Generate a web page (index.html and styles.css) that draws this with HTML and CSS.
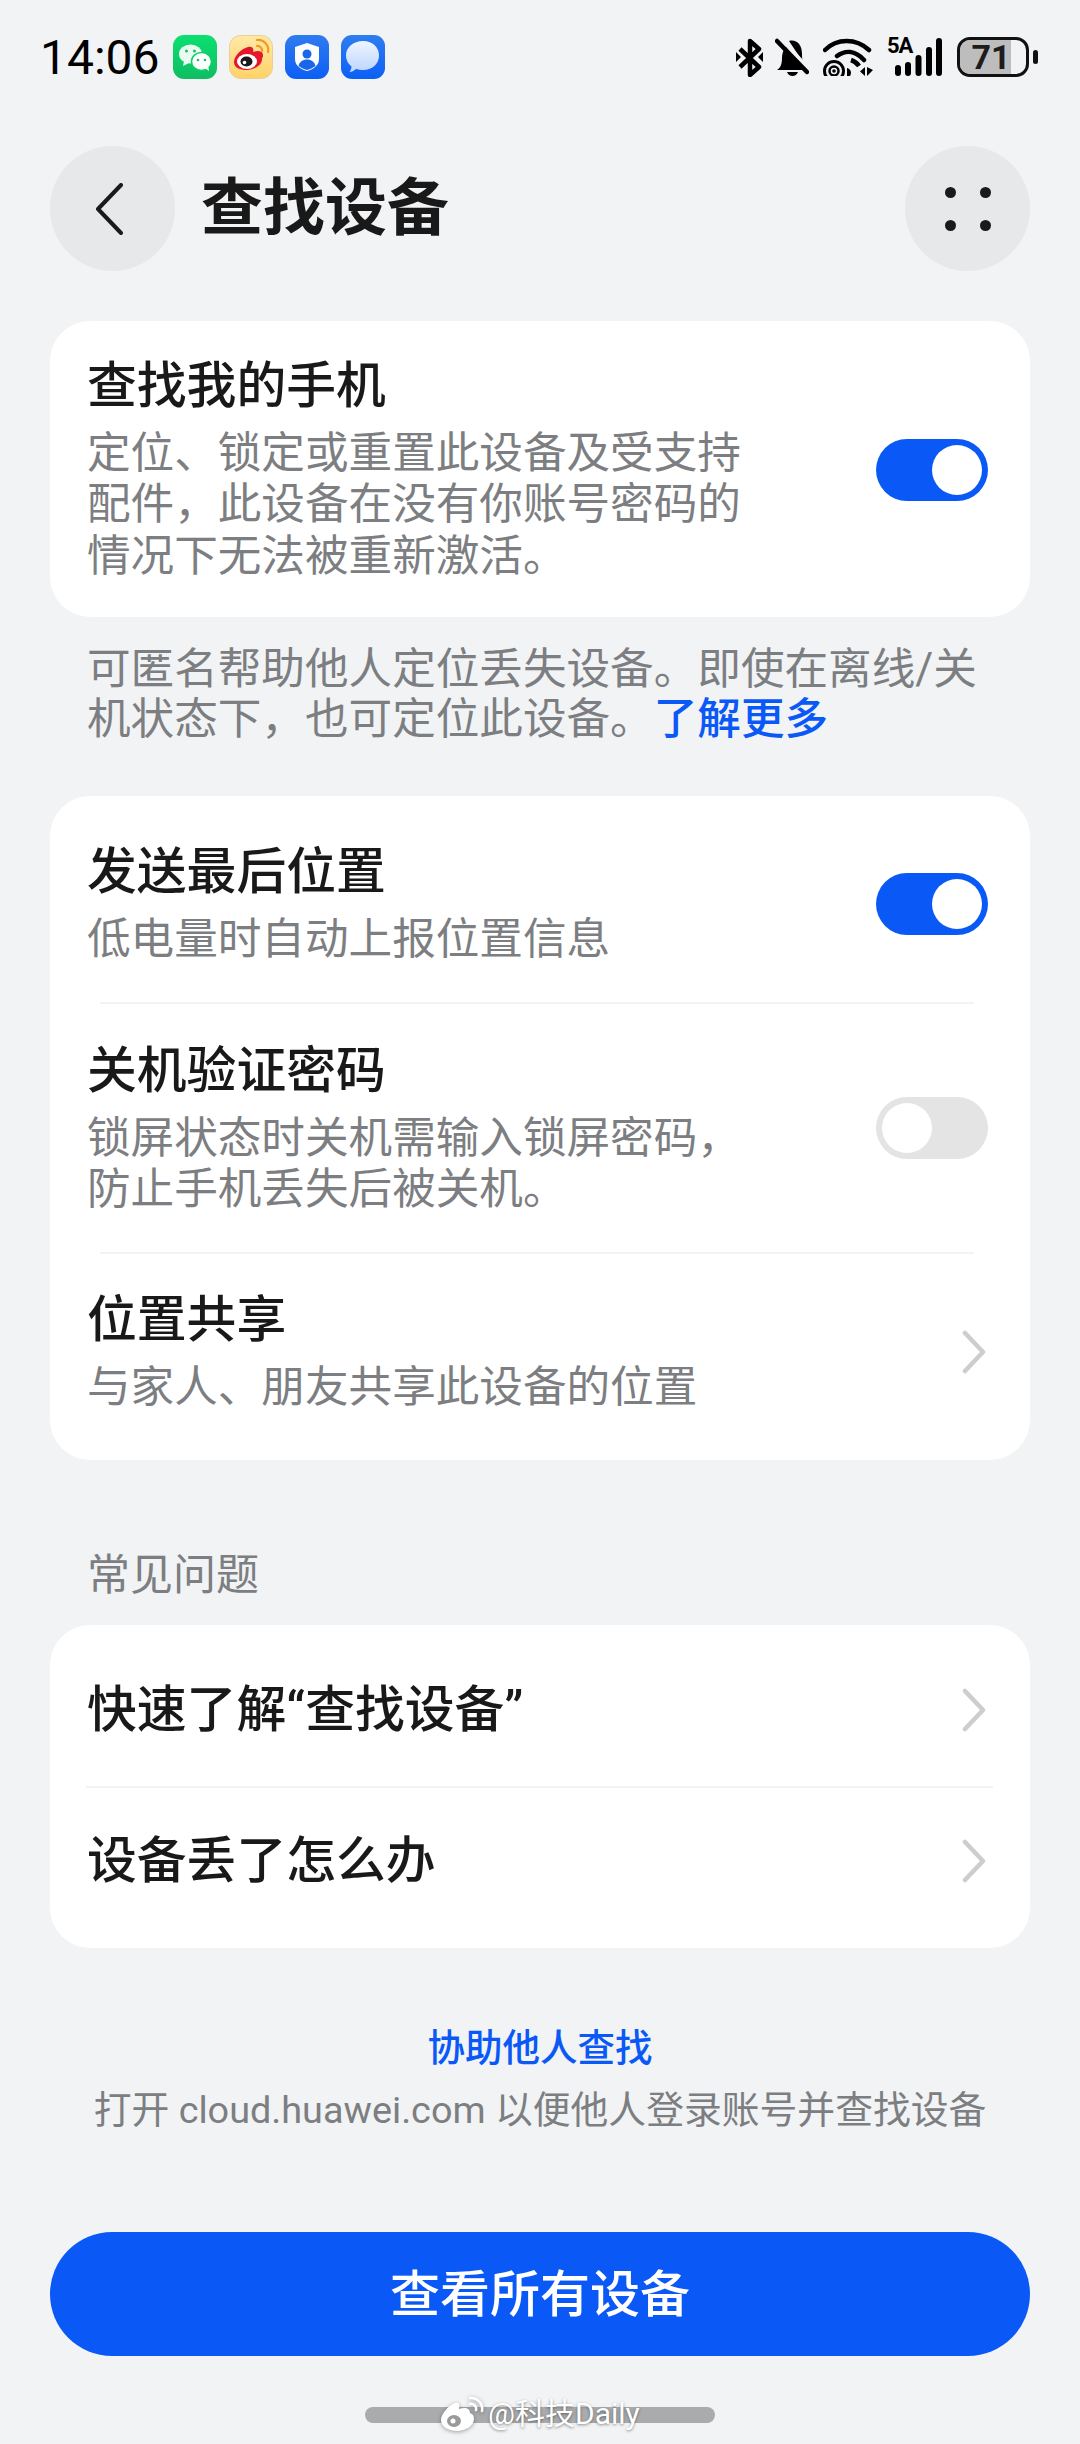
FILE: index.html
```html
<!DOCTYPE html>
<html lang="zh">
<head>
  <meta charset="UTF-8">
  <meta name="viewport" content="width=device-width, initial-scale=1.0">
  <title>查找设备</title>
  <link rel="stylesheet" href="styles.css">
</head>
<body>
  <!-- Status bar -->
  <div class="status-bar">
    <div class="status-left">
      <span class="time">14:06</span>
      <svg class="app-icon" viewBox="0 0 44 44">
        <defs><linearGradient id="wcBg" x1="0" y1="0" x2="0" y2="1"><stop offset="0" stop-color="#0be070"/><stop offset="1" stop-color="#0fbd62"/></linearGradient></defs>
        <rect width="44" height="44" rx="11" fill="url(#wcBg)"/>
        <ellipse cx="17.500" cy="19" rx="11.500" ry="9.500" fill="#eafcf2"/>
        <path d="M11 26l-1 5 6-3z" fill="#eafcf2"/>
        <ellipse cx="28.500" cy="26.500" rx="10" ry="9" fill="#fff" stroke="#0dd067" stroke-width="1.500"/>
        <path d="M32 33l4 3-1-6z" fill="#fff"/>
        <circle cx="13.500" cy="16" r="1.500" fill="#0ec865"/><circle cx="21.500" cy="16" r="1.500" fill="#0ec865"/>
        <circle cx="25" cy="25" r="1.300" fill="#0ec865"/><circle cx="32" cy="25" r="1.300" fill="#0ec865"/>
      </svg>
      <svg class="app-icon" viewBox="0 0 44 44">
        <defs><linearGradient id="wbBg" x1="0" y1="0" x2="0" y2="1"><stop offset="0" stop-color="#ffe9a8"/><stop offset="1" stop-color="#ffd267"/></linearGradient></defs>
        <rect x=".5" y=".5" width="43" height="43" rx="11" fill="url(#wbBg)" stroke="#e8cf98"/>
        <path d="M5 27c0-6 7-13 14-15 5-1 6 2 5 5 5-2 10-1 10 3 0 2 0 2-1 3 1 7-8 12-15 12S5 33 5 27z" fill="#e6162d"/>
        <ellipse cx="18" cy="26.500" rx="10" ry="7.500" fill="#fff"/>
        <ellipse cx="17.500" cy="26.500" rx="6" ry="5" fill="#1a1a1a"/>
        <circle cx="15.500" cy="27.500" r="1.800" fill="#fff"/>
        <path d="M28 5a10 10 0 0 1 11 12M28 11a4.500 4.500 0 0 1 5 5" fill="none" stroke="#f59a1b" stroke-width="2.200" stroke-linecap="round"/>
      </svg>
      <svg class="app-icon" viewBox="0 0 44 44">
        <defs><linearGradient id="blBg" x1="0" y1="0" x2="0" y2="1"><stop offset="0" stop-color="#2f7bf0"/><stop offset="1" stop-color="#0c5ff5"/></linearGradient></defs>
        <rect width="44" height="44" rx="11" fill="url(#blBg)"/>
        <path d="M22 8l12 4v12c0 6-5 10-12 12-7-2-12-6-12-12V12z" fill="#fff"/>
        <circle cx="22" cy="19" r="4.500" fill="#1a66e8"/>
        <path d="M13.500 31c1-4 4-6.500 8.500-6.500s7.500 2.500 8.500 6.500c-2 1.500-5 3-8.500 4-3.500-1-6.500-2.500-8.500-4z" fill="#1a66e8"/>
      </svg>
      <svg class="app-icon" viewBox="0 0 44 44">
        <defs>
          <linearGradient id="msBg" x1="0" y1="0" x2="0" y2="1"><stop offset="0" stop-color="#2f7df0"/><stop offset="1" stop-color="#0c5ff5"/></linearGradient>
          <linearGradient id="msFg" x1="0" y1="0" x2="0" y2="1"><stop offset="0" stop-color="#eef5ff"/><stop offset="1" stop-color="#bcd6fd"/></linearGradient>
        </defs>
        <rect width="44" height="44" rx="11" fill="url(#msBg)"/>
        <path d="M22 6c10 0 16 6.500 16 14.500S32 35 22 35c-2.500 0-5-.5-7-1-2 2-4.500 3-6.500 3 1-1.500 2-3.500 2-5.500C7 29 5 25 5 20.500 5 12.500 12 6 22 6z" fill="url(#msFg)"/>
      </svg>
    </div>
    <div class="status-right">
      <svg class="ic-bt" viewBox="0 0 27 39">
        <path d="M4 11l19 18-9 8V3l9 8L4 29" fill="none" stroke="#000" stroke-width="4.500" stroke-linejoin="round"/>
        <path d="M0 14l5 5-5 5zM27 14l-5 5 5 5z" fill="#000"/>
      </svg>
      <svg class="ic-bell" viewBox="0 0 34 38">
        <path d="M2 32c3-2 5-5 5-12 0-4 1-8 4-11l18 22 2 1z" fill="#000"/>
        <path d="M14 3c7-2 13 3 13 13 0 3 0 5 1 8z" fill="#000"/>
        <path d="M12 34h11c-1 2.500-3 4-5.500 4s-4.500-1.500-5.500-4z" fill="#000"/>
        <path d="M2 3l30 31" stroke="#000" stroke-width="4.500" stroke-linecap="round"/>
        <path d="M9 3l24 26" stroke="#f1f3f5" stroke-width="2.500"/>
      </svg>
      <svg class="ic-wifi" viewBox="0 0 50 38">
        <path d="M2 12C14 0 33 0 46 12M14 18c8-6 18-6 27 4" fill="none" stroke="#000" stroke-width="4.500" stroke-linecap="round"/>
        <path d="M28 22c3 1 6 3 8 6" fill="none" stroke="#000" stroke-width="4.500"/>
        <circle cx="11" cy="33" r="9.500" fill="none" stroke="#000" stroke-width="3"/>
        <circle cx="11" cy="33" r="4.500" fill="none" stroke="#000" stroke-width="2.500"/>
        <circle cx="11" cy="33" r="1.800" fill="#000"/>
        <path d="M24 30c4 1 5 5 3 8h-3z" fill="#000"/>
        <path d="M42 29l-5 4.500 5 4.500zM44 29v9l6-6z" fill="#000"/>
      </svg>
      <div class="signal">
        <span class="signal-label">5A</span>
        <svg class="ic-bars" viewBox="0 0 48 38">
          <rect x="1" y="27" width="6" height="11" rx="3"/>
          <rect x="11" y="24" width="6" height="14" rx="3"/>
          <rect x="21.500" y="17" width="6" height="21" rx="3"/>
          <rect x="32" y="9" width="6" height="29" rx="3"/>
          <rect x="42" y="0" width="6" height="38" rx="3"/>
        </svg>
      </div>
      <div class="battery">
        <div class="battery-body">
          <div class="battery-fill"></div>
          <span class="battery-num">71</span>
        </div>
        <div class="battery-nub"></div>
      </div>
    </div>
  </div>

  <!-- Header -->
  <div class="header">
    <div class="round-btn">
      <svg class="ic-back" viewBox="0 0 28 52"><path d="M26 2L3 26l23 24" fill="none" stroke="#1a1a1a" stroke-width="4" stroke-linecap="round" stroke-linejoin="round"/></svg>
    </div>
    <h1 class="page-title">查找设备</h1>
    <div class="round-btn">
      <div class="dots"><i></i><i></i><i></i><i></i></div>
    </div>
  </div>

  <!-- Find my phone -->
  <div class="card">
    <div class="row row-first-card">
      <div class="row-text">
        <div class="row-title">查找我的手机</div>
        <div class="row-sub">定位、锁定或重置此设备及受支持<br>配件，此设备在没有你账号密码的<br>情况下无法被重新激活。</div>
      </div>
      <div class="toggle on"><i></i></div>
    </div>
  </div>
  <p class="note">可匿名帮助他人定位丢失设备。即使在离线/关<br>机状态下，也可定位此设备。<a class="more">了解更多</a></p>

  <!-- Options -->
  <div class="card">
    <div class="row row-last-pos">
      <div class="row-text">
        <div class="row-title">发送最后位置</div>
        <div class="row-sub">低电量时自动上报位置信息</div>
      </div>
      <div class="toggle on"><i></i></div>
    </div>
    <div class="divider"></div>
    <div class="row row-shutdown">
      <div class="row-text">
        <div class="row-title">关机验证密码</div>
        <div class="row-sub">锁屏状态时关机需输入锁屏密码，<br>防止手机丢失后被关机。</div>
      </div>
      <div class="toggle"><i></i></div>
    </div>
    <div class="divider"></div>
    <div class="row row-share">
      <div class="row-text">
        <div class="row-title">位置共享</div>
        <div class="row-sub">与家人、朋友共享此设备的位置</div>
      </div>
      <svg class="chevron" viewBox="0 0 24 44"><path d="M3 3l18 19L3 41" fill="none" stroke="#cdcdcd" stroke-width="4.500" stroke-linecap="round" stroke-linejoin="round"/></svg>
    </div>
  </div>

  <!-- FAQ -->
  <div class="section-label">常见问题</div>
  <div class="card">
    <div class="row row-faq-top">
      <div class="row-title">快速了解“查找设备”</div>
      <svg class="chevron" viewBox="0 0 24 44"><path d="M3 3l18 19L3 41" fill="none" stroke="#cdcdcd" stroke-width="4.500" stroke-linecap="round" stroke-linejoin="round"/></svg>
    </div>
    <div class="divider wide"></div>
    <div class="row row-faq-bottom">
      <div class="row-title">设备丢了怎么办</div>
      <svg class="chevron" viewBox="0 0 24 44"><path d="M3 3l18 19L3 41" fill="none" stroke="#cdcdcd" stroke-width="4.500" stroke-linecap="round" stroke-linejoin="round"/></svg>
    </div>
  </div>

  <div class="help">
    <a class="help-link">协助他人查找</a>
    <p class="help-text">打开 cloud.huawei.com 以便他人登录账号并查找设备</p>
  </div>

  <button class="main-btn">查看所有设备</button>

  <div class="home-bar"></div>

  <!-- Watermark -->
  <div class="watermark">
    <svg class="wm-logo" viewBox="0 0 44 36">
      <path d="M1 24c0-6 7-14 14-17 4-1 5 2 4 6 6-2 11-1 11 4 3 1 4 3 4 6 0 7-9 12-17 12S1 31 1 24z" fill="#fff"/>
      <ellipse cx="14" cy="25" rx="7" ry="6" fill="#9a9a9a"/>
      <circle cx="13" cy="25" r="2.500" fill="#fff"/>
      <path d="M30 2a11 11 0 0 1 12 13M30 8a5 5 0 0 1 6 6" fill="none" stroke="#fff" stroke-width="2.500" stroke-linecap="round"/>
    </svg>
    <span class="wm-text">@科技Daily</span>
  </div>
</body>
</html>
```

FILE: styles.css
```css
* {
  margin: 0;
  padding: 0;
  box-sizing: border-box;
}

body {
  position: relative;
  width: 1080px;
  height: 2444px;
  overflow: hidden;
  background-color: #f1f3f5;
  color: #191919;
  font-family: Roboto, "Noto Sans CJK SC", sans-serif;
  display: flex;
  flex-direction: column;
}

/* Status bar */
.status-bar {
  height: 114px;
  padding: 0 42px 0 40px;
  display: flex;
  justify-content: space-between;
  align-items: center;
  flex-shrink: 0;
}

.status-left {
  display: flex;
  align-items: center;
}

.time {
  font-size: 48px;
  color: #000;
  width: 133px;
}

.app-icon {
  width: 44px;
  height: 44px;
  margin-right: 12px;
}

.status-right {
  display: flex;
  align-items: center;
}

.ic-bt {
  width: 27px;
  height: 39px;
  margin-right: 12px;
}

.ic-bell {
  width: 34px;
  height: 38px;
  margin-right: 14px;
}

.ic-wifi {
  width: 50px;
  height: 38px;
  margin-right: 14px;
}

.signal {
  position: relative;
  width: 55px;
  height: 38px;
  margin-right: 15px;
  display: flex;
  justify-content: flex-end;
}

.signal-label {
  position: absolute;
  left: 0;
  top: -5px;
  font-size: 22px;
  line-height: 26px;
  font-weight: 700;
  letter-spacing: -1px;
  color: #000;
}

.ic-bars {
  width: 48px;
  height: 38px;
}

.battery {
  display: flex;
  align-items: center;
  gap: 4px;
}

.battery-body {
  position: relative;
  width: 72px;
  height: 40px;
  border: 3.500px solid #111;
  border-radius: 13px;
  overflow: hidden;
  display: flex;
  align-items: center;
  justify-content: center;
}

.battery-fill {
  position: absolute;
  left: 0;
  top: 0;
  bottom: 0;
  width: 78%;
  background-color: #bdbdbd;
}

.battery-num {
  position: relative;
  margin-right: 4px;
  font-size: 34px;
  font-weight: 700;
  color: #1c1c1c;
  line-height: 1;
}

.battery-nub {
  width: 5px;
  height: 14px;
  border-radius: 3px;
  background-color: #111;
}

/* Header */
.header {
  margin-top: 32px;
  padding: 0 50px;
  display: flex;
  align-items: center;
  flex-shrink: 0;
}

.round-btn {
  width: 125px;
  height: 125px;
  border-radius: 50%;
  background-color: #e7e8ea;
  display: flex;
  align-items: center;
  justify-content: center;
}

.ic-back {
  width: 28px;
  height: 52px;
  margin-right: 7px;
}

.page-title {
  flex: 1;
  margin-left: 26px;
  font-size: 62px;
  line-height: 125px;
  font-weight: 700;
  color: #191919;
}

.dots {
  display: grid;
  grid-template-columns: 11px 11px;
  gap: 22px 24px;
}

.dots i {
  width: 11px;
  height: 11px;
  border-radius: 50%;
  background-color: #1a1a1a;
}

/* Cards */
.card {
  margin: 0 50px;
  background-color: #fff;
  border-radius: 40px;
  flex-shrink: 0;
}

.header + .card {
  margin-top: 50px;
}

.row {
  padding: 0 42px 0 37px;
  display: flex;
  justify-content: space-between;
  align-items: center;
}

.row-first-card {
  height: 296px;
}

.row-first-card .toggle {
  margin-top: 2px;
}

.row-last-pos {
  height: 206px;
  padding-top: 10px;
}

.row-shutdown {
  height: 248px;
}

.row-share {
  height: 206px;
  padding-bottom: 10px;
}

.row-faq-top {
  height: 161px;
  padding-top: 8px;
}

.row-faq-bottom {
  height: 160px;
  padding-bottom: 14px;
}

.row-title {
  font-size: 49.800px;
  line-height: 60px;
  font-weight: 500;
  color: #191919;
}

.row-sub {
  margin-top: 12px;
  font-size: 43.600px;
  line-height: 51.500px;
  color: #7c7e81;
}

.toggle {
  width: 112px;
  height: 62px;
  padding: 6px;
  border-radius: 31px;
  background-color: #e4e4e4;
  display: flex;
  justify-content: flex-start;
  flex-shrink: 0;
}

.toggle.on {
  background-color: #0a59f7;
  justify-content: flex-end;
}

.toggle i {
  width: 50px;
  height: 50px;
  border-radius: 50%;
  background-color: #fff;
}

.chevron {
  width: 24px;
  height: 44px;
  margin-right: 2px;
  flex-shrink: 0;
}

.divider {
  height: 2px;
  margin: 0 56px 0 50px;
  background-color: #f3f3f3;
}

.divider.wide {
  margin: 0 37px 0 36px;
}

/* Text between cards */
.note {
  padding: 28px 50px 51px 87px;
  font-size: 43.600px;
  line-height: 50px;
  color: #7c7e81;
  flex-shrink: 0;
}

.more {
  color: #0a59f7;
  font-weight: 500;
}

.section-label {
  margin-top: 91px;
  padding: 0 87px;
  height: 74px;
  font-size: 43px;
  line-height: 48px;
  color: #7c7e81;
  flex-shrink: 0;
}

.help {
  margin-top: 76px;
  text-align: center;
  flex-shrink: 0;
}

.help-link {
  display: block;
  font-size: 37.500px;
  line-height: 48px;
  font-weight: 500;
  color: #0a59f7;
}

.help-text {
  margin-top: 14px;
  font-size: 37.800px;
  line-height: 48px;
  color: #7c7e81;
}

.main-btn {
  margin: 98px 50px 0;
  height: 124px;
  padding-bottom: 8px;
  border: none;
  border-radius: 62px;
  background-color: #0a59f7;
  color: #fff;
  font-family: inherit;
  font-size: 50px;
  font-weight: 500;
  flex-shrink: 0;
}

.home-bar {
  width: 350px;
  height: 16px;
  margin: 51px auto 0;
  border-radius: 8px;
  background-color: #aaabad;
  flex-shrink: 0;
}

/* Watermark sits over the home bar */
.watermark {
  position: absolute;
  left: 440px;
  top: 2396px;
  display: flex;
  align-items: center;
  gap: 4px;
}

.wm-logo {
  width: 44px;
  height: 36px;
  filter: drop-shadow(0 1px 2px rgba(0, 0, 0, 0.35));
}

.wm-text {
  font-size: 30px;
  line-height: 36px;
  color: #fff;
  text-shadow: 0 1px 3px rgba(0, 0, 0, 0.45);
}
```
